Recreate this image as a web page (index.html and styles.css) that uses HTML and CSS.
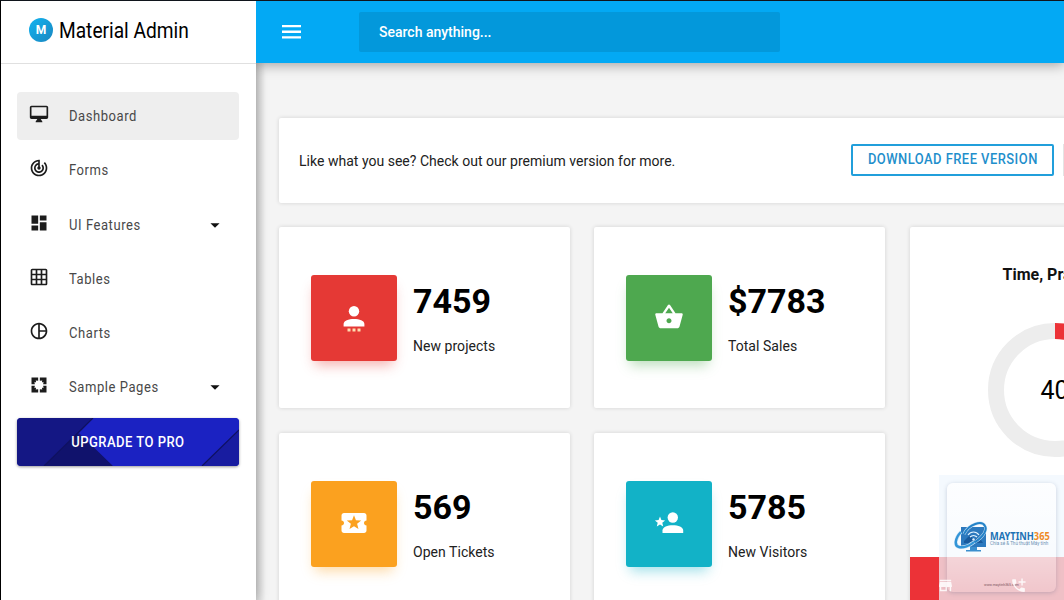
FILE: index.html
```html
<!DOCTYPE html>
<html lang="en">
<head>
    <meta charset="UTF-8">
    <meta name="viewport" content="width=device-width, initial-scale=1.0">
    <title>Material Admin</title>
    <link rel="stylesheet" href="styles.css">
</head>
<body>
    <aside class="sidebar">
        <div class="brand">
            <span class="brand-logo">M</span>
            <span class="brand-name">Material Admin</span>
        </div>
        <nav class="menu">
            <a class="menu-item active">
                <svg class="menu-icon" viewBox="0 0 24 24"><path d="M21 2H3c-1.1 0-2 .9-2 2v12c0 1.1.9 2 2 2h7l-2 3v1h8v-1l-2-3h7c1.1 0 2-.9 2-2V4c0-1.1-.9-2-2-2zm0 12H3V4h18v10z"/></svg>
                <span>Dashboard</span>
            </a>
            <a class="menu-item">
                <svg class="menu-icon" viewBox="0 0 24 24"><path d="M19.07 4.93l-1.41 1.41C19.1 7.79 20 9.79 20 12c0 4.42-3.58 8-8 8s-8-3.58-8-8c0-4.08 3.05-7.44 7-7.93v2.02C8.16 6.57 6 9.03 6 12c0 3.31 2.69 6 6 6s6-2.69 6-6c0-1.66-.67-3.16-1.76-4.24l-1.41 1.41C15.55 9.9 16 10.9 16 12c0 2.21-1.79 4-4 4s-4-1.79-4-4c0-1.86 1.28-3.41 3-3.86v2.14c-.6.35-1 .98-1 1.72 0 1.1.9 2 2 2s2-.9 2-2c0-.74-.4-1.38-1-1.72V2h-1C6.48 2 2 6.48 2 12s4.48 10 10 10 10-4.48 10-10c0-2.76-1.12-5.26-2.93-7.07z"/></svg>
                <span>Forms</span>
            </a>
            <a class="menu-item">
                <svg class="menu-icon" viewBox="0 0 24 24"><path d="M3 13h8V3H3v10zm0 8h8v-6H3v6zm10 0h8V11h-8v10zm0-18v6h8V3h-8z"/></svg>
                <span>UI Features</span>
                <svg class="menu-arrow" viewBox="0 0 24 24"><path d="M7 10l5 5 5-5z"/></svg>
            </a>
            <a class="menu-item">
                <svg class="menu-icon" viewBox="0 0 24 24"><path d="M20 2H4c-1.1 0-2 .9-2 2v16c0 1.1.9 2 2 2h16c1.1 0 2-.9 2-2V4c0-1.1-.9-2-2-2zM8 20H4v-4h4v4zm0-6H4v-4h4v4zm0-6H4V4h4v4zm6 12h-4v-4h4v4zm0-6h-4v-4h4v4zm0-6h-4V4h4v4zm6 12h-4v-4h4v4zm0-6h-4v-4h4v4zm0-6h-4V4h4v4z"/></svg>
                <span>Tables</span>
            </a>
            <a class="menu-item">
                <svg class="menu-icon" viewBox="0 0 24 24"><path d="M12 2C6.48 2 2 6.48 2 12s4.48 10 10 10 10-4.48 10-10S17.52 2 12 2zm1 2.07c3.61.45 6.48 3.33 6.93 6.93H13V4.07zM4 12c0-4.06 3.07-7.44 7-7.93v15.87c-3.93-.5-7-3.88-7-7.94zm9 7.93V13h6.93c-.45 3.61-3.32 6.48-6.93 6.93z"/></svg>
                <span>Charts</span>
            </a>
            <a class="menu-item">
                <svg class="menu-icon" viewBox="0 0 24 24"><path d="M3 3h8v4L8 6.500 8.500 8 7.500 9 6.500 8 7 11H3zM3 13h4l-.500 3 1-1 1 1L8 17.500l3-.500v4H3zM21 3h-8v4l3-.500L15.500 8l1 1 1-1L17 11h4zM21 13h-4l.500 3-1-1-1 1 .500 1.500-3-.500v4h8z"/></svg>
                <span>Sample Pages</span>
                <svg class="menu-arrow" viewBox="0 0 24 24"><path d="M7 10l5 5 5-5z"/></svg>
            </a>
            <a class="upgrade">
                <svg class="upgrade-bg" viewBox="0 0 222 48" preserveAspectRatio="none">
                    <rect width="222" height="48" fill="#1b22c2"/>
                    <path d="M0 0H76L96 48H0z" fill="#141784"/>
                    <path d="M60 16L27 48H96L76 28z" fill="#10126c"/>
                    <path d="M76 0L62 15L96 48H222V0z" fill="#1b22c2"/>
                    <path d="M222 12L185 48H222z" fill="#181ca0"/>
                    <path d="M222 12L185 48M76 0L27 48" stroke="#0f1160" stroke-width="1.2" fill="none"/>
                </svg>
                <span>UPGRADE TO PRO</span>
            </a>
        </nav>
    </aside>

    <div class="page">
        <header class="topbar">
            <svg class="burger" viewBox="0 0 20 14"><path d="M0 0h19v2.300H0zM0 5.600h19v2.300H0zM0 11.200h19v2.300H0z"/></svg>
            <div class="search">Search anything...</div>
        </header>

        <main class="content">
            <section class="card banner">
                <p>Like what you see? Check out our premium version for more.</p>
                <div class="banner-buttons">
                    <a class="btn-outline"><span>DOWNLOAD FREE VERSION</span></a>
                    <a class="btn-solid"></a>
                </div>
            </section>

            <section class="grid">
                <div class="card stat">
                    <div class="tile red">
                        <svg viewBox="0 0 30 30"><circle cx="15" cy="9.3" r="5.2"/><path d="M4.6 24.500v-2.500c0-3.400 5-5.100 10.400-5.100s10.400 1.700 10.400 5.100v2.500z"/><path class="dots" d="M8.500 26.500h3v3h-3zM13.500 26.500h3v3h-3zM18.500 26.500h3v3h-3z"/></svg>
                    </div>
                    <div class="stat-text">
                        <h2>7459</h2>
                        <p>New projects</p>
                    </div>
                </div>
                <div class="card stat">
                    <div class="tile green">
                        <svg viewBox="0 0 24 24"><path d="M17.210 9l-4.380-6.560c-.190-.280-.510-.420-.830-.420-.320 0-.640.140-.830.430L6.790 9H2c-.550 0-1 .450-1 1 0 .090.010.180.040.270l2.540 9.270c.230.840 1 1.460 1.920 1.460h13c.920 0 1.690-.620 1.930-1.460l2.540-9.270L23 10c0-.550-.450-1-1-1h-4.790zM9 9l3-4.400L15 9H9zm3 8c-1.100 0-2-.900-2-2s.900-2 2-2 2 .900 2 2-.900 2-2 2z"/></svg>
                    </div>
                    <div class="stat-text">
                        <h2>$7783</h2>
                        <p>Total Sales</p>
                    </div>
                </div>
                <div class="card chart">
                    <h3>Time, Practice</h3>
                    <div class="donut">
                        <svg viewBox="0 0 134 134">
                            <circle cx="67" cy="67" r="59" fill="none" stroke="#ededed" stroke-width="16"/>
                            <path d="M67 8A59 59 0 0 1 101.700 114.700" fill="none" stroke="#ec3237" stroke-width="16"/>
                        </svg>
                        <span>40</span>
                    </div>
                    <div class="chart-footer">
                        <svg viewBox="0 0 24 24"><path d="M20 4H4v2h16V4zm1 10v-2l-1-5H4l-1 5v2h1v6h10v-6h4v6h2v-6h1zm-9 4H6v-4h6v4z"/></svg>
                        <svg viewBox="0 0 24 24"><path d="M20 15.500c-1.250 0-2.450-.200-3.570-.570-.350-.110-.740-.030-1.020.240l-2.200 2.200c-2.830-1.440-5.150-3.750-6.590-6.590l2.200-2.200c.280-.280.360-.670.250-1.020C8.700 6.450 8.500 5.250 8.500 4c0-.550-.450-1-1-1H4c-.550 0-1 .450-1 1 0 9.390 7.610 17 17 17 .550 0 1-.450 1-1v-3.500c0-.550-.450-1-1-1zM18 6V2h-2v4h-4v2h4v4h2V8h4V6z"/></svg>
                    </div>
                </div>
                <div class="card stat">
                    <div class="tile orange">
                        <svg viewBox="0 0 24 24"><path d="M20 12c0-1.100.900-2 2-2V6c0-1.100-.900-2-2-2H4c-1.100 0-1.990.900-1.990 2v4c1.100 0 1.990.900 1.990 2s-.890 2-2 2v4c0 1.100.900 2 2 2h16c1.100 0 2-.900 2-2v-4c-1.100 0-2-.900-2-2zm-4.420 4.800L12 14.500l-3.580 2.300 1.080-4.120-3.290-2.690 4.240-.250L12 5.800l1.540 3.950 4.240.250-3.290 2.690 1.090 4.110z"/></svg>
                    </div>
                    <div class="stat-text">
                        <h2>569</h2>
                        <p>Open Tickets</p>
                    </div>
                </div>
                <div class="card stat">
                    <div class="tile teal">
                        <svg viewBox="0 0 30 30"><circle cx="18.800" cy="9.500" r="5.200"/><path d="M8.500 25v-2.600c0-3.500 5-5.200 10.300-5.200s10.400 1.700 10.400 5.200v2.600z"/><path d="M6 8.600l1.400 3.500 3.700.300-2.800 2.400.900 3.600L6 16.400l-3.200 2 .900-3.600L.900 12.400l3.700-.300z"/></svg>
                    </div>
                    <div class="stat-text">
                        <h2>5785</h2>
                        <p>New Visitors</p>
                    </div>
                </div>
            </section>
        </main>
    </div>

    <!-- site badge over the lower right corner -->
    <div class="badge">
        <div class="badge-card">
            <div class="badge-logo">
                <svg viewBox="0 0 36 34">
                    <path d="M7 6h25v20H7z" fill="#2c79be"/>
                    <path d="M16 26h7v3h4v1.500H12V29h4z" fill="#3b8fce"/>
                    <path d="M10 20l6-6 4 5 5-3 4 6H10z" fill="#185a9d"/>
                    <g fill="none" stroke="#e4f3ff" stroke-width="1.200"><path d="M14 14c3-4 8-4 11 0M16 16c2-2 5-2 7 0"/></g>
                    <circle cx="19.500" cy="18.500" r="1.200" fill="#e4f3ff"/>
                    <path d="M10 13C15 3 28-1 31 5c3 5-5 15-15 18" fill="none" stroke="#c9e2f5" stroke-width="3"/>
                    <path d="M10 13C15 3 28-1 31 5c3 5-5 15-15 18" fill="none" stroke="#2382c8" stroke-width="2"/>
                    <path d="M7 11C1 17 0 25 5 26c4 1 11-1 15-5" fill="none" stroke="#c9e2f5" stroke-width="3.400"/>
                    <path d="M7 11C1 17 0 25 5 26c4 1 11-1 15-5" fill="none" stroke="#3295d7" stroke-width="2.400"/>
                </svg>
                <div class="badge-text">
                    <strong>MAYTINH<em>365</em></strong>
                    <small>Chia sẻ &amp; Thủ thuật Máy tính</small>
                </div>
            </div>
            <div class="badge-url">www.maytinh365.com</div>
        </div>
    </div>
</body>
</html>
```

FILE: styles.css
```css
* {
    box-sizing: border-box;
}
body {
    margin: 0;
    width: 1064px;
    height: 600px;
    overflow: hidden;
    display: flex;
    position: relative;
    border-top: 1px solid #10151c;
    border-left: 1px solid #000;
    background: #f4f4f4;
    font-family: Roboto, sans-serif;
    font-size: 14px;
    color: #212121;
}
h2, h3, p {
    margin: 0;
}
svg {
    display: block;
    flex: none;
    fill: currentColor;
}

/* Sidebar */
.sidebar {
    flex: none;
    width: 255px;
    background: #fff;
    box-shadow: 0 0 12px rgba(0, 0, 0, 0.3);
}
.brand {
    display: flex;
    align-items: center;
    height: 63px;
    padding: 0 0 4px 28px;
    border-bottom: 1px solid #e0e0e0;
}
.brand-logo {
    width: 24px;
    height: 24px;
    margin-right: 6px;
    border-radius: 50%;
    background: linear-gradient(135deg, #12b4f0, #1a86c0);
    color: #fff;
    font-size: 12px;
    font-weight: 700;
    line-height: 25px;
    text-align: center;
}
.brand-name {
    font-size: 22px;
    color: #000;
    white-space: nowrap;
    transform: scaleX(0.87);
    transform-origin: left;
}
.menu {
    display: flex;
    flex-direction: column;
    gap: 6.3px;
    padding: 28px 17px 0 16px;
}
.menu-item {
    display: flex;
    align-items: center;
    height: 48px;
    padding: 0 13px 0 12px;
    border-radius: 4px;
    color: #484848;
    letter-spacing: 0.6px;
}
.menu-item.active {
    background: #eee;
}
.menu-item span {
    transform: scaleX(0.93);
    transform-origin: left;
}
.menu-icon {
    width: 20px;
    height: 20px;
    margin: 0 20px 4px 0;
    color: #1c1c1c;
}
.menu-arrow {
    width: 22px;
    height: 22px;
    margin-left: auto;
    color: #111;
}
.upgrade {
    display: grid;
    place-items: center;
    height: 48px;
    border-radius: 4px;
    overflow: hidden;
    box-shadow: 0 1px 3px rgba(0, 0, 0, 0.4);
    color: #fff;
    font-weight: 500;
    letter-spacing: 0.5px;
}
.upgrade > * {
    grid-area: 1 / 1;
}
.upgrade span {
    z-index: 1;
    transform: scaleX(0.93);
}
.upgrade-bg {
    width: 222px;
    height: 48px;
}

/* Top bar */
.page {
    width: 808px;
    overflow: hidden;
    background: linear-gradient(90deg, rgba(0, 0, 0, 0.12), rgba(0, 0, 0, 0) 10px);
}
.topbar {
    display: flex;
    align-items: center;
    height: 62px;
    padding-left: 26px;
    position: relative;
    background: #03a9f4;
    box-shadow: 0 2px 12px rgba(0, 0, 0, 0.35);
    color: #fff;
}
.burger {
    width: 20px;
    height: 14px;
}
.search {
    width: 421px;
    height: 40px;
    margin-left: 57px;
    padding-left: 20px;
    border-radius: 2px;
    background: #0398db;
    font-weight: 500;
    line-height: 40px;
}

/* Content */
.content {
    width: 966px;
    padding: 55px 20px 0 23px;
}
.card {
    background: #fff;
    border-radius: 2px;
    box-shadow: 0 0 4px rgba(0, 0, 0, 0.14);
}
.banner {
    display: flex;
    align-items: center;
    justify-content: space-between;
    height: 85px;
    padding-left: 20px;
    margin-bottom: 24px;
    letter-spacing: 0.02px;
}
.banner-buttons {
    display: flex;
    gap: 9px;
    width: 351px;
    padding-bottom: 2px;
}
.btn-outline {
    display: flex;
    justify-content: center;
    width: 203px;
    height: 32px;
    border: 2px solid #219fdb;
    border-radius: 2px;
    color: #1f8fcc;
    font-weight: 500;
    line-height: 26px;
    letter-spacing: 0.5px;
    white-space: nowrap;
}
.btn-outline span {
    transform: scaleX(0.925);
}
.btn-solid {
    width: 120px;
    height: 32px;
    background: #e4e4e4;
}
.grid {
    display: grid;
    grid-template-columns: 291px 292px 289px;
    grid-template-rows: 181px 181px;
    gap: 25px 24px;
}
.stat {
    display: flex;
    align-items: flex-start;
    width: 291px;
    padding: 48px 0 0 32px;
}
.tile {
    display: grid;
    place-items: center;
    width: 86px;
    height: 86px;
    margin-right: 16px;
    border-radius: 3px;
    color: #fff;
}
.tile svg {
    width: 30px;
    height: 30px;
    margin-bottom: 2px;
}
.tile .dots {
    fill: #ffdcb0;
}
.red {
    background: #e53935;
    box-shadow: 0 8px 12px -4px rgba(229, 57, 53, 0.4);
}
.green {
    background: #4ea84f;
    box-shadow: 0 8px 12px -4px rgba(78, 168, 79, 0.4);
}
.orange {
    background: #fba11f;
    box-shadow: 0 8px 12px -4px rgba(251, 161, 31, 0.4);
}
.teal {
    background: #12b2c7;
    box-shadow: 0 8px 12px -4px rgba(18, 178, 199, 0.4);
}
.stat-text h2 {
    padding-top: 5px;
    color: #000;
    font-size: 34px;
    font-weight: 700;
    line-height: 42px;
}
.stat-text p {
    margin-top: 14px;
    line-height: 20px;
    letter-spacing: 0.04px;
}

/* Donut card */
.chart {
    grid-row: span 2;
    display: flex;
    flex-direction: column;
    align-items: center;
    padding-top: 37px;
}
.chart h3 {
    color: #111;
    font-size: 16px;
    font-weight: 700;
    line-height: 22px;
}
.donut {
    display: grid;
    place-items: center;
    width: 134px;
    height: 134px;
    margin-top: 37px;
}
.donut > * {
    grid-area: 1 / 1;
}
.donut svg {
    width: 134px;
    height: 134px;
}
.donut span {
    color: #000;
    font-size: 25px;
}
.chart-footer {
    display: flex;
    gap: 56px;
    align-self: stretch;
    height: 57px;
    margin-top: auto;
    padding: 20px 0 0 27px;
    background: #ec3237;
}
.chart-footer svg {
    position: relative;
    z-index: 2;
    width: 17px;
    height: 17px;
    color: rgba(255, 255, 255, 0.85);
}

/* Corner badge */
.badge {
    position: absolute;
    left: 938px;
    top: 474px;
    width: 125px;
    height: 125px;
    padding: 8px;
    background: rgba(240, 246, 254, 0.72);
}
.badge-card {
    height: 109px;
    padding-top: 38px;
    border-radius: 6px;
    background: linear-gradient(rgba(255, 255, 255, 0.8), rgba(255, 255, 255, 0.1));
    box-shadow: 0 1px 4px rgba(60, 80, 120, 0.25);
}
.badge-logo {
    display: flex;
    align-items: center;
    padding-left: 7px;
}
.badge-logo svg {
    width: 36px;
    height: 34px;
}
.badge-text {
    width: 60px;
    white-space: nowrap;
}
.badge-text strong {
    display: block;
    color: #2072b5;
    font-family: "Noto Sans", sans-serif;
    font-size: 11px;
    line-height: 11px;
    transform: scaleX(0.84);
    transform-origin: left;
}
.badge-text em {
    color: #ee8a25;
    font-style: normal;
}
.badge-text small {
    display: block;
    color: #6f93b5;
    font-size: 4.6px;
    line-height: 6px;
}
.badge-url {
    margin-top: 28px;
    color: #7d5560;
    font-size: 3.5px;
    line-height: 5px;
    text-align: center;
}
```
